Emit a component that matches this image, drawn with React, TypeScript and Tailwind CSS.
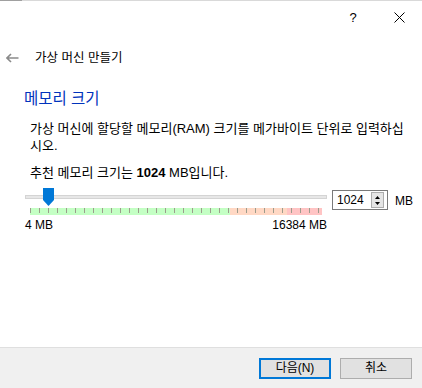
import React from "react";

const font = { fontFamily: '"Liberation Sans", "Noto Sans CJK KR", sans-serif' };

export default function App() {
  const ticks = Array.from({ length: 33 }, (_, i) => i);
  return (
    <div className="w-[422px] h-[388px] bg-white flex flex-col text-[12px] text-black" style={font}>
      <div className="h-[1px] bg-[#d9d9d9] flex"><div className="w-[22px] bg-[#a0a0a0]" /></div>
      <div className="h-[33px] flex items-center justify-end">
        <div className="w-[46px] h-full flex items-center justify-center text-[13px]">?</div>
        <div className="w-[46px] h-full flex items-center justify-center">
          <svg width="11" height="11" viewBox="0 0 11 11"><path d="M0.5 0.5L10.5 10.5M10.5 0.5L0.5 10.5" stroke="#000" strokeWidth="1" /></svg>
        </div>
      </div>
      <div className="h-[42px] flex items-center pl-[6px] pt-[6px]">
        <svg width="13" height="10" viewBox="0 0 13 10"><path d="M5 1L1 5L5 9M1 5H12.5" stroke="#8a8a8a" strokeWidth="1.6" fill="none" /></svg>
        <span className="ml-[16px] text-[12.5px]">가상 머신 만들기</span>
      </div>
      <div className="pl-[24px] pt-[13px] text-[15.5px] text-[#0033bc] leading-[20px]">메모리 크기</div>
      <div className="pl-[30px] pr-[4px] pt-[11px] leading-[17px] text-[13px] whitespace-nowrap">
        가상 머신에 할당할 메모리(RAM) 크기를 메가바이트 단위로 입력하십<br />시오.
      </div>
      <div className="pl-[30px] pt-[10px] leading-[17px] text-[13px]">
        추천 메모리 크기는 <b>1024</b> MB입니다.
      </div>
      <div className="flex pl-[25px] pt-[5px]">
        <div className="w-[302px] flex flex-col">
          <div className="relative h-[22px] flex items-center">
            <div className="w-full h-[4px] bg-[#e7e7e7] border border-[#d4d4d4]" />
            <svg className="absolute left-[18px] top-[2px]" width="11" height="18" viewBox="0 0 11 18"><path d="M0 0H11V12L5.5 18L0 12Z" fill="#0078d7" /></svg>
          </div>
          <div className="relative ml-[5px] w-[292px] h-[7px] flex">
            <div className="w-[200px] bg-[#c4ffc4]" />
            <div className="w-[57px] bg-[#ffd8c4]" />
            <div className="w-[35px] bg-[#ffc4c4]" />
            {ticks.map((i) => (
              <div key={i} className="absolute top-0 w-[1px] h-[5px] bg-[#9c9c8c]" style={{ left: i * 9 }} />
            ))}
          </div>
          <div className="flex justify-between pt-[3px] leading-[14px]">
            <span>4 MB</span>
            <span>16384 MB</span>
          </div>
        </div>
        <div className="ml-[5px] mt-[4px] w-[56px] h-[20px] border border-[#7a7a7a] flex items-center pl-[4px] pr-[3px]">
          <span className="flex-1">1024</span>
          <div className="w-[13px] h-[16px] border border-[#adadad] bg-[#e5e5e5] flex flex-col items-center justify-center gap-[3px]">
            <svg width="5" height="3" viewBox="0 0 5 3"><path d="M2.5 0L5 3H0Z" fill="#000" /></svg>
            <svg width="5" height="3" viewBox="0 0 5 3"><path d="M0 0H5L2.5 3Z" fill="#000" /></svg>
          </div>
        </div>
        <span className="ml-[7px] mt-[6px]">MB</span>
      </div>
      <div className="flex-1" />
      <div className="h-[41px] bg-[#f0f0f0] border-t border-[#dfdfdf] flex items-center justify-end pr-[10px] gap-[9px]">
        <div className="w-[72px] h-[21px] border-2 border-[#0078d7] bg-[#e1e1e1] flex items-center justify-center">다음(N)</div>
        <div className="w-[72px] h-[21px] border border-[#adadad] bg-[#e1e1e1] flex items-center justify-center">취소</div>
      </div>
    </div>
  );
}
